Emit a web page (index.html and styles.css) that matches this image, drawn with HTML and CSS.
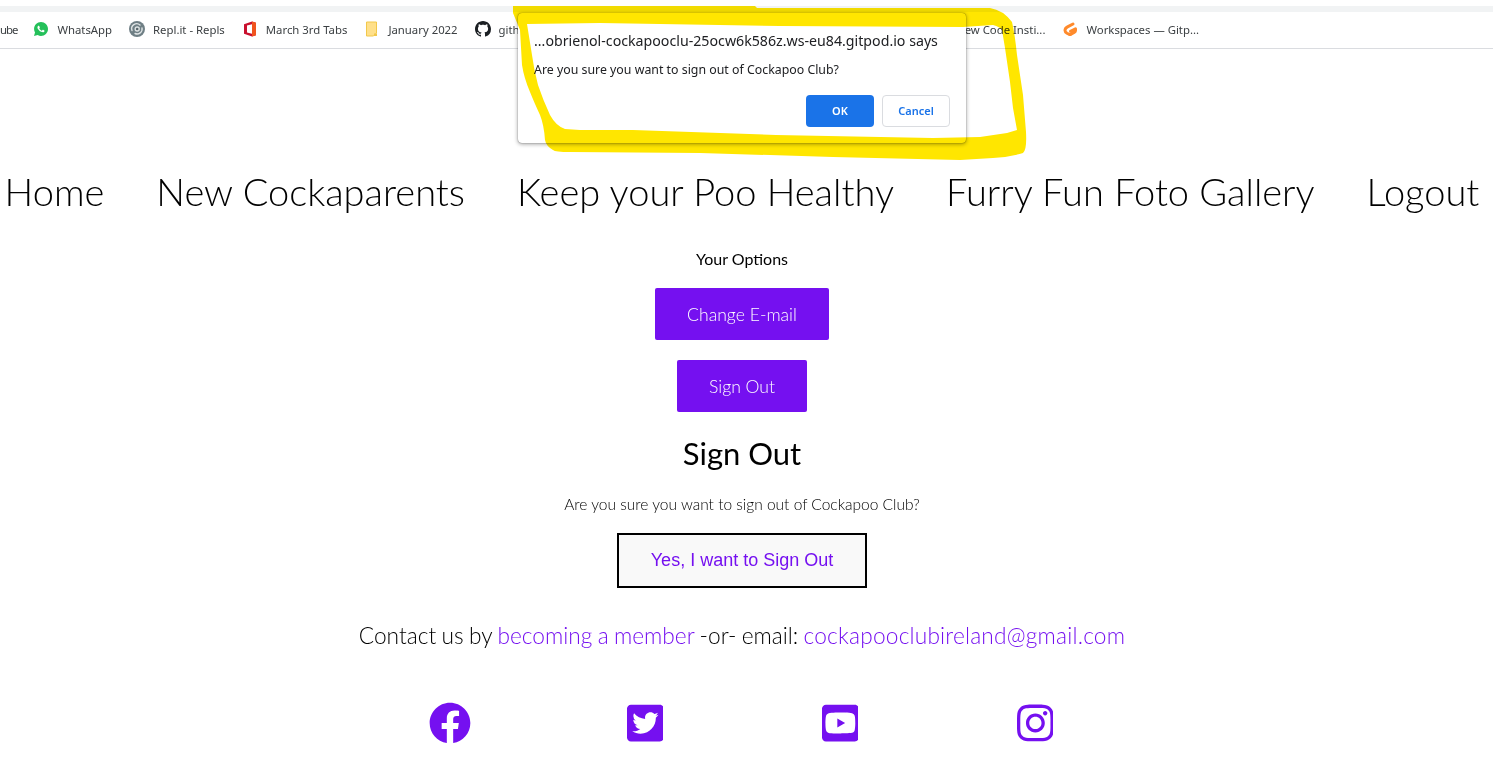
FILE: index.html
```html
<!DOCTYPE html>
<html lang="en">
<head>
  <meta charset="UTF-8">
  <meta name="viewport" content="width=device-width, initial-scale=1">
  <title>Cockapoo Club</title>
  <link rel="stylesheet" href="styles.css">
</head>
<body>
  <div class="tab-strip"></div>

  <div class="bookmarks">
    <span class="bookmark bookmark-cut">ube</span>
    <span class="bookmark">
      <svg class="bm-icon" viewBox="0 0 448 512"><path fill="#25c05a" d="M224 32C101 32 2 131 2 254c0 39 10 77 30 111L0 480l118-31c32 18 69 27 106 27 123 0 224-100 224-222S347 32 224 32z"/><path fill="#fff" d="M325 300c-6-3-33-16-38-18s-9-3-13 3-14 18-17 22c-3 3-7 4-12 1-33-16-54-29-76-66-6-10 6-9 16-30 2-4 1-7-1-10-1-3-12-30-17-41-4-11-9-9-12-10h-11c-4 0-10 2-15 7s-19 19-19 46 20 54 23 58 39 60 95 84c35 15 49 16 67 14 10-2 33-14 37-27s5-24 3-26c-1-3-5-4-10-7z"/></svg>
      WhatsApp
    </span>
    <span class="bookmark">
      <svg class="bm-icon" viewBox="0 0 16 16"><circle cx="8" cy="8" r="8" fill="#6f7f85"/><path fill="none" stroke="#dfe4e5" stroke-width="1.400" stroke-linecap="round" d="M3 9.500A5 5 0 0 1 11 4M13 7a5 5 0 0 1-7 5.500"/><circle cx="8.200" cy="8" r="2.700" fill="#dfe4e5"/><circle cx="8.200" cy="8" r="1.300" fill="#56656a"/></svg>
      Repl.it - Repls
    </span>
    <span class="bookmark">
      <svg class="bm-icon" viewBox="0 0 16 16"><path fill="#c9102e" d="M2 3.200 10 .5l4 1.300v12.400L10 15.500l-8-2.700z"/><path fill="#f0541e" d="M10 .5l4 1.300v12.400l-4 1.300z"/><path fill="#fff" d="M5 4.400l5-1.200v9.600l-5-1.200z"/></svg>
      March 3rd Tabs
    </span>
    <span class="bookmark">
      <svg class="bm-icon bm-note" viewBox="0 0 14 16"><path fill="#ffe08a" stroke="#f2c84b" d="M1.500 1h10v11l-3 3h-7z"/><path fill="#f2c84b" d="M9 12.500h3V15H9z"/></svg>
      January 2022
    </span>
    <span class="bookmark">
      <svg class="bm-icon" viewBox="0 0 16 16"><path fill="#1b1f23" d="M8 0C3.580 0 0 3.580 0 8c0 3.540 2.290 6.530 5.470 7.590.4.07.55-.17.55-.38 0-.19-.01-.82-.01-1.490-2.010.37-2.530-.49-2.690-.94-.09-.23-.48-.94-.82-1.130-.28-.15-.68-.52-.01-.53.63-.01 1.080.58 1.230.82.72 1.210 1.870.87 2.330.66.07-.52.28-.87.51-1.070-1.780-.2-3.640-.89-3.640-3.950 0-.87.31-1.590.82-2.150-.08-.2-.36-1.020.08-2.120 0 0 .67-.21 2.200.82.64-.18 1.320-.27 2-.27.68 0 1.360.09 2 .27 1.530-1.040 2.200-.82 2.200-.82.44 1.100.16 1.920.08 2.120.51.56.82 1.270.82 2.150 0 3.070-1.870 3.750-3.650 3.950.29.25.54.73.54 1.480 0 1.070-.01 1.930-.01 2.200 0 .21.15.46.55.38A8.013 8.013 0 0016 8c0-4.420-3.580-8-8-8z"/></svg>
      gith
    </span>
    <span class="bookmark bookmark-far">ew Code Insti...</span>
    <span class="bookmark">
      <svg class="bm-icon" viewBox="0 0 16 16"><path fill="none" stroke="#ff8a2b" stroke-width="3" stroke-linecap="round" stroke-linejoin="round" d="M11 3 5.500 5.900Q3 7.200 3 9.500v0Q3 11 5 12.200l2 1.100q1 .5 2 0l3.500-2q1-.6 1-1.800V7.800L8.500 10.300"/></svg>
      Workspaces — Gitp...
    </span>
  </div>

  <div class="page">
    <nav class="main-nav">
      <a href="#">Home</a>
      <a href="#">New Cockaparents</a>
      <a href="#">Keep your Poo Healthy</a>
      <a href="#">Furry Fun Foto Gallery</a>
      <a href="#">Logout</a>
    </nav>

    <main class="content">
      <p class="options-title">Your Options</p>
      <a class="btn-purple btn-email" href="#">Change E-mail</a>
      <a class="btn-purple btn-signout" href="#">Sign Out</a>
      <h2>Sign Out</h2>
      <p class="confirm-text">Are you sure you want to sign out of Cockapoo Club?</p>
      <button class="btn-confirm">Yes, I want to Sign Out</button>
    </main>

    <footer class="site-footer">
      <p class="contact">Contact us by <a href="#">becoming a member</a> -or- email: <a class="contact-mail" href="#">cockapooclubireland@gmail.com</a></p>
      <div class="socials">
        <a href="#"><svg class="social-fb" viewBox="0 0 512 512"><path d="M504 256C504 119 393 8 256 8S8 119 8 256c0 123.780 90.690 226.380 209.250 245V327.690h-63V256h63v-54.640c0-62.150 37-96.480 93.670-96.480 27.140 0 55.520 4.840 55.520 4.840v61h-31.280c-30.800 0-40.410 19.120-40.410 38.730V256h68.780l-11 71.690h-57.780V501C413.310 482.380 504 379.780 504 256z"/></svg></a>
        <a href="#"><svg viewBox="0 0 448 512"><path d="M400 32H48C21.500 32 0 53.500 0 80v352c0 26.500 21.500 48 48 48h352c26.500 0 48-21.500 48-48V80c0-26.500-21.500-48-48-48zm-48.900 158.800c.2 2.800.2 5.700.2 8.500 0 86.700-66 186.600-186.600 186.600-37.200 0-71.700-10.800-100.700-29.400 5.300.6 10.400.8 15.800.8 30.700 0 58.900-10.400 81.400-28-28.800-.6-53-19.500-61.300-45.500 10.100 1.500 19.200 1.500 29.600-1.200-30-6.100-52.500-32.500-52.500-64.400v-.8c8.700 4.900 18.900 7.900 29.600 8.300a65.447 65.447 0 0 1-29.200-54.600c0-12.200 3.200-23.400 8.900-33.100 32.300 39.800 80.800 65.800 135.200 68.600-9.300-44.500 24-80.600 64-80.600 18.900 0 35.900 7.900 47.900 20.700 14.800-2.800 29-8.300 41.600-15.800-4.900 15.200-15.100 28-28.600 36.100 13-1.400 25.600-5 37.300-10.100-8.800 13-19.900 24.500-32.600 33.800z"/></svg></a>
        <a href="#"><svg viewBox="0 0 448 512"><path d="M186.800 202.100l95.200 54.100-95.200 54.100V202.100zM448 80v352c0 26.500-21.500 48-48 48H48c-26.500 0-48-21.500-48-48V80c0-26.500 21.500-48 48-48h352c26.500 0 48 21.500 48 48zm-42 176.300s0-59.600-7.600-88.200c-4.200-15.800-16.500-28.200-32.200-32.400C337.900 128 224 128 224 128s-113.900 0-142.200 7.700c-15.700 4.200-28 16.600-32.200 32.400-7.600 28.500-7.600 88.200-7.600 88.200s0 59.600 7.600 88.200c4.200 15.800 16.500 27.700 32.200 31.900C110.100 384 224 384 224 384s113.900 0 142.200-7.700c15.700-4.200 28-16.100 32.200-31.900 7.600-28.500 7.600-88.100 7.600-88.100z"/></svg></a>
        <a href="#"><svg viewBox="0 0 448 512"><path d="M224.100 141c-63.600 0-114.900 51.300-114.900 114.900s51.300 114.900 114.900 114.900S339 319.500 339 255.900 287.700 141 224.100 141zm0 189.600c-41.100 0-74.700-33.500-74.700-74.700s33.500-74.700 74.700-74.700 74.700 33.500 74.700 74.700-33.600 74.700-74.700 74.700zm146.400-194.300c0 14.900-12 26.800-26.800 26.800-14.900 0-26.800-12-26.800-26.800s12-26.800 26.800-26.800 26.800 12 26.800 26.800zm76.100 27.200c-1.700-35.900-9.900-67.700-36.200-93.900-26.200-26.200-58-34.400-93.900-36.200-37-2.100-147.900-2.100-184.900 0-35.800 1.700-67.600 9.900-93.900 36.100s-34.400 58-36.200 93.900c-2.100 37-2.100 147.900 0 184.900 1.700 35.900 9.900 67.700 36.200 93.900s58 34.400 93.900 36.200c37 2.100 147.900 2.100 184.900 0 35.900-1.700 67.700-9.900 93.900-36.200 26.200-26.200 34.400-58 36.200-93.900 2.100-37 2.100-147.800 0-184.800zM398.800 388c-7.800 19.600-22.900 34.700-42.600 42.600-29.500 11.700-99.500 9-132.100 9s-102.700 2.600-132.100-9c-19.600-7.800-34.700-22.900-42.600-42.600-11.700-29.500-9-99.500-9-132.100s-2.600-102.700 9-132.100c7.800-19.600 22.900-34.700 42.600-42.600 29.500-11.700 99.500-9 132.100-9s102.700-2.600 132.100 9c19.600 7.800 34.700 22.900 42.600 42.600 11.700 29.500 9 99.500 9 132.100s2.700 102.700-9 132.100z"/></svg></a>
      </div>
    </footer>
  </div>

  <!-- browser confirm box -->
  <div class="alert-box">
    <div class="alert-title">...obrienol-cockapooclu-25ocw6k586z.ws-eu84.gitpod.io says</div>
    <div class="alert-msg">Are you sure you want to sign out of Cockapoo Club?</div>
    <div class="alert-actions">
      <button class="alert-ok">OK</button>
      <button class="alert-cancel">Cancel</button>
    </div>
  </div>

  <!-- yellow marker scribble around the box -->
  <svg class="scribble" viewBox="0 0 1493 775" width="1493" height="775">
    <path fill="#ffe600" fill-rule="evenodd" d="M513 6 L755 6 L757 8 L990 8 Q1003 10 1012 22 Q1015 35 1017 55 L1023 95 L1026 132 Q1027 150 1023 153 Q1010 157 993 158 L960 160 L833 157 L700 153 L570 152 Q555 152 553 150 Q546 146 545 140 Q544 125 540 115 Q534 102 530 92 Q524 78 522 65 L520 30 L513 13 Z M527 24 L600 23 L780 26 L963 27 L993 25 Q1000 27 1002 30 L1005 48 L1010 82 L1013 108 L1017 130 L1007 133 L980 137 L933 138 L776 135 L633 130 L580 130 L565 129 Q556 126 550 115 Q543 100 538 85 Q534 70 532 55 Z"/>
  </svg>
</body>
</html>
```

FILE: styles.css
```css
body {
  margin: 0;
  background: #fff;
  font-family: 'Lato', sans-serif;
  color: #000;
  overflow: hidden;
}
a {
  text-decoration: none;
}

/* browser chrome */
.tab-strip {
  height: 6px;
  margin-top: 6px;
  background: #f1f3f4;
}
.bookmarks {
  display: flex;
  align-items: center;
  gap: 17px;
  box-sizing: border-box;
  height: 37px;
  padding-bottom: 2px;
  border-bottom: 1px solid #dadce0;
  font-family: 'Noto Sans', sans-serif;
  font-size: 11.35px;
  color: #3c4043;
  white-space: nowrap;
  overflow: hidden;
}
.bookmark {
  display: flex;
  align-items: center;
  gap: 8px;
}
.bookmark-cut {
  margin-right: -1px;
  letter-spacing: -1px;
}
.bookmark-far {
  margin-left: 428px;
}
.bm-icon {
  width: 16px;
  height: 16px;
  flex: none;
}

/* page */
.page {
  width: 1484px;
  text-align: center;
}
.main-nav {
  display: flex;
  justify-content: center;
  gap: 52px;
  padding-top: 118px;
  font-size: 38px;
  font-weight: 300;
  line-height: 48px;
}
.main-nav a {
  color: #000;
}
.content {
  display: flex;
  flex-direction: column;
  align-items: center;
}
.options-title {
  margin: 34px 0 19px;
  font-size: 16px;
  line-height: 20px;
}
.btn-purple {
  display: block;
  height: 52px;
  padding: 0 32px;
  border-radius: 2px;
  background: #7510f0;
  color: #fff;
  font-size: 17.6px;
  font-weight: 300;
  line-height: 54px;
}
.btn-email {
  margin-bottom: 20px;
}
h2 {
  margin: 19px 0 19px;
  font-size: 31px;
  font-weight: 400;
  line-height: 44px;
}
.confirm-text {
  margin: 0 0 19px;
  font-size: 15.5px;
  font-weight: 300;
  line-height: 20px;
}
.btn-confirm {
  width: 250px;
  height: 55px;
  border: 2px solid #000;
  background: #f9f9f9;
  color: #7510f0;
  font-family: 'Liberation Sans', sans-serif;
  font-size: 18px;
}
.contact {
  margin: 34px 0 0;
  font-size: 22.7px;
  font-weight: 300;
  line-height: 28px;
  word-spacing: -.8px;
}
.contact a {
  color: #7510f0;
}
.contact-mail {
  letter-spacing: .2px;
}
.socials {
  display: grid;
  grid-template-columns: repeat(4, 195px);
  justify-content: center;
  margin: 52px 0 0 1px;
}
.socials a {
  display: flex;
  justify-content: center;
}
.socials svg {
  height: 42px;
  fill: #7510f0;
}

/* confirm dialog */
.alert-box {
  position: absolute;
  left: 518px;
  top: 13px;
  box-sizing: border-box;
  width: 448px;
  height: 130px;
  padding: 18px 16px 16px;
  border-radius: 4px;
  background: #fff;
  box-shadow: 0 0 1px rgba(0, 0, 0, .6), 0 1px 4px rgba(0, 0, 0, .4);
  font-family: 'Noto Sans', sans-serif;
  color: #202124;
}
.alert-title {
  font-size: 14.2px;
  line-height: 20px;
}
.alert-msg {
  margin-top: 10px;
  font-size: 12.35px;
  line-height: 18px;
}
.alert-actions {
  display: flex;
  justify-content: flex-end;
  gap: 8px;
  margin-top: 16px;
}
.alert-actions button {
  width: 68px;
  height: 32px;
  padding: 0 0 2px;
  border-radius: 4px;
  font-family: inherit;
  font-size: 11px;
  font-weight: 600;
}
.alert-ok {
  border: none;
  background: #1a73e8;
  color: #fff;
}
.alert-cancel {
  border: 1px solid #dadce0;
  background: #fff;
  color: #1a73e8;
}

.scribble {
  position: absolute;
  left: 0;
  top: 0;
  mix-blend-mode: multiply;
  pointer-events: none;
}
```
